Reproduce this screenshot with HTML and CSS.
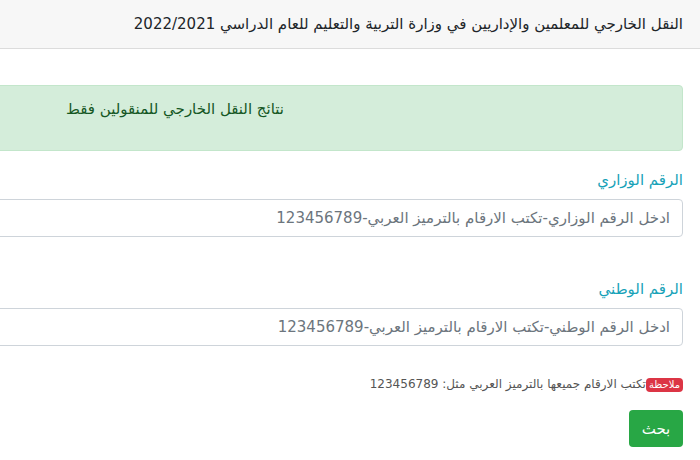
FILE: index.html
```html
<!DOCTYPE html>
<html lang="ar" dir="rtl">
<head>
    <meta charset="UTF-8">
    <meta name="viewport" content="width=device-width, initial-scale=1.0">
    <title>النقل الخارجي</title>
    <link rel="stylesheet" href="styles.css">
</head>
<body>
    <div class="topbar">النقل الخارجي للمعلمين والإداريين في وزارة التربية والتعليم للعام الدراسي 2022/2021</div>

    <div class="content">
        <div class="alert">نتائج النقل الخارجي للمنقولين فقط</div>

        <form>
            <div class="group">
                <label for="minNo">الرقم الوزاري</label>
                <input id="minNo" class="field" type="text" placeholder="ادخل الرقم الوزاري-تكتب الارقام بالترميز العربي-123456789">
            </div>

            <div class="group">
                <label for="natNo">الرقم الوطني</label>
                <input id="natNo" class="field" type="text" placeholder="ادخل الرقم الوطني-تكتب الارقام بالترميز العربي-123456789">
            </div>

            <p class="note"><span class="badge">ملاحظة</span>تكتب الارقام جميعها بالترميز العربي مثل: 123456789</p>

            <button type="submit" class="btn">بحث</button>
        </form>
    </div>
</body>
</html>
```

FILE: styles.css
```css
body {
    margin: 0;
    padding: 0;
    font-family: "DejaVu Sans", sans-serif;
    color: #212529;
    background-color: white;
    overflow: hidden;
}

.topbar {
    height: 49px;
    line-height: 49px;
    padding-right: 17px;
    background-color: #f7f7f7;
    border-bottom: 1px solid #dcdcdc;
    font-size: 15px;
    box-sizing: border-box;
}

.content {
    margin-left: -60px;
    padding-right: 17px;
    padding-top: 36px;
}

.alert {
    height: 66px;
    box-sizing: border-box;
    padding: 12px 398px 0 20px;
    line-height: 22px;
    background-color: #d4edda;
    border: 1px solid #c3e6cb;
    border-radius: 4px;
    color: #155724;
    font-size: 15px;
    white-space: nowrap;
}

.group {
    margin-top: 18px;
}

.group + .group {
    margin-top: 41px;
}

label {
    display: block;
    color: #17a2b8;
    font-size: 15px;
    line-height: 22px;
    margin-bottom: 8px;
}

.field {
    display: block;
    width: 100%;
    height: 38px;
    box-sizing: border-box;
    padding: 0 12px;
    border: 1px solid #ced4da;
    border-radius: 4px;
    font-family: inherit;
    font-size: 15px;
}

.field::placeholder {
    color: #6c757d;
}

.note {
    margin: 28px 0 16px;
    line-height: 20px;
    font-size: 12px;
    color: #555;
}

.badge {
    display: inline-block;
    padding: 0 3px;
    line-height: 14px;
    background-color: #dc3545;
    color: white;
    border-radius: 4px;
    font-size: 10px;
}

.btn {
    display: block;
    width: 54px;
    height: 37px;
    border: none;
    border-radius: 4px;
    background-color: #28a745;
    color: white;
    font-family: inherit;
    font-size: 15px;
}
```
